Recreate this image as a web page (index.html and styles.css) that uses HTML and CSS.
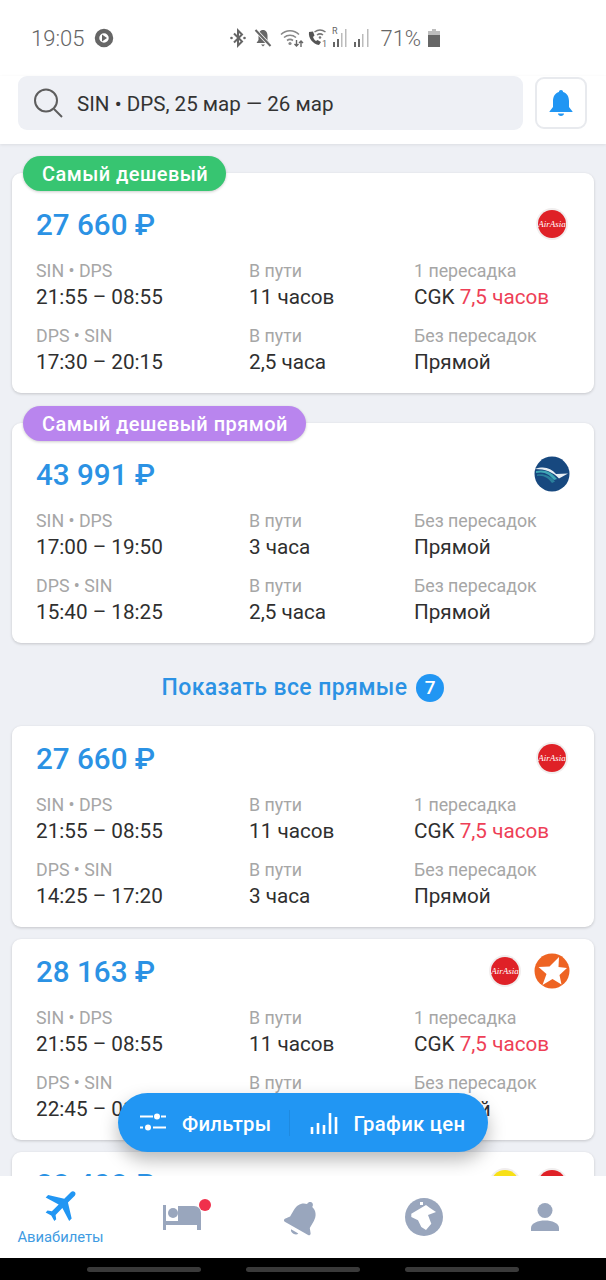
FILE: index.html
```html
<!DOCTYPE html>
<html>
  <head>
    <title>Авиабилеты</title>
    <link rel="stylesheet" href="styles.css">
    <meta name="viewport" content="width=device-width, initial-scale=1.0" />
  </head>
  <body>
    <div class="screen">
      <div class="status">
        <span class="clock">19:05</span>
        <svg class="st-play" viewBox="0 0 20 20"><circle cx="10" cy="10" r="7" fill="none" stroke="#666" stroke-width="4.500"/><path d="M8 6.500l5 3.500-5 3.500z" fill="#666"/></svg>
        <div class="st-icons">
          <svg width="18" height="20" viewBox="0 0 18 20"><path d="M5 5.500l8 8-4 4V2.500l4 4-8 8" fill="none" stroke="#666" stroke-width="2"/><circle cx="2.500" cy="10" r="1.300" fill="#666"/><circle cx="15.500" cy="10" r="1.300" fill="#666"/></svg>
          <svg class="st-mute" width="18" height="20" viewBox="0 0 18 20"><path d="M9 2c3 0 4.500 2.500 4.500 5.500V12l2 3H2.500l2-3V7.500C4.500 4.500 6 2 9 2zM7 16.500h4L9 18.500z" fill="#666"/><path d="M1.500 2l15 16" stroke="#fff" stroke-width="3.500"/><path d="M1.500 2l15 16" stroke="#666" stroke-width="2"/></svg>
          <svg class="st-wifi" width="24" height="20" viewBox="0 0 24 20"><path d="M1 6.500C6 1.500 14 1.500 19 6.500M4 9.500c3.500-3 8.500-3 12 0M7 12.500c2-1.500 4-1.500 6 0" fill="none" stroke="#888" stroke-width="1.600"/><circle cx="10" cy="15.500" r="1.600" fill="#888"/><path d="M16.500 12v6M14.500 16l2 2 2-2M21 19v-6M19 15l2-2 2 2" fill="none" stroke="#666" stroke-width="1.400"/></svg>
          <svg class="st-call" width="23" height="22" viewBox="0 0 23 22"><path d="M3 5c-1 6 4 12 10 13l2-3-3.500-2-1.500 1c-1.500-1-2.500-2.500-3-4l1.500-1.500L7 4.500z" fill="#555"/><path d="M8.500 5c4-3 7-3 11 0M11 8c2-1.500 4-1.500 6 0" fill="none" stroke="#777" stroke-width="1.500"/><circle cx="14" cy="10.500" r="1.300" fill="#777"/><text x="16" y="20" class="st-tiny">1</text></svg>
          <svg class="st-sim1" width="20" height="22" viewBox="0 0 20 22"><text x="2" y="7" class="st-tiny">R</text><path d="M3 15h2v5H3zM7 12h2v8H7z" fill="#666"/><path d="M11 6h1.500v14H11zM15 2h1.500v18H15z" fill="#bbb"/></svg>
          <svg class="st-sim2" width="20" height="22" viewBox="0 0 20 22"><path d="M2 15h2v5H2zM6 12h2v8H6z" fill="#666"/><path d="M10 7h1.500v13H10zM15 2h1.500v18H15z" fill="#bbb"/></svg>
          <span class="st-pct">71%</span>
          <svg class="st-batt" width="14" height="20" viewBox="0 0 14 20"><path d="M5 1h4v2h4v16H1V3h4z" fill="#bdbdbd"/><path d="M1 7h12v12H1z" fill="#666"/></svg>
        </div>
      </div>

      <header class="search-head">
        <div class="search-box">
          <svg class="search-ic" width="32" height="32" viewBox="0 0 32 32"><circle cx="14" cy="13.500" r="11" fill="none" stroke="#5d5d5d" stroke-width="2"/><path d="M22 22l8 8" stroke="#5d5d5d" stroke-width="2"/></svg>
          <span>SIN • DPS, 25 мар — 26 мар</span>
        </div>
        <div class="bell-btn">
          <svg width="26" height="28" viewBox="0 0 26 28"><path d="M13 1c1.300 0 2 .8 2.100 1.900C19 4 21 7.500 21 12v6l3.500 4.500v.5h-23v-.5L5 18v-6c0-4.500 2-8 5.900-9.100C11 1.800 11.700 1 13 1zM10 24.500h6c0 1.500-1.300 2.500-3 2.500s-3-1-3-2.500z" fill="#2196f3"/></svg>
        </div>
      </header>

      <main class="list">
        <section class="card badged">
          <span class="badge green">Самый дешевый</span>
          <div class="card-top">
            <span class="price">27 660 ₽</span>
            <svg class="logo" viewBox="0 0 36 36"><circle cx="18" cy="18" r="16" fill="#f1eeee"/><circle cx="18" cy="18" r="14" fill="#df2127"/><text x="18" y="21" class="aa">AirAsia</text></svg>
          </div>
          <div class="row">
            <div class="col"><small>SIN • DPS</small><b>21:55 – 08:55</b></div>
            <div class="col"><small>В пути</small><b>11 часов</b></div>
            <div class="col"><small>1 пересадка</small><b>CGK <em>7,5 часов</em></b></div>
          </div>
          <div class="row">
            <div class="col"><small>DPS • SIN</small><b>17:30 – 20:15</b></div>
            <div class="col"><small>В пути</small><b>2,5 часа</b></div>
            <div class="col"><small>Без пересадок</small><b>Прямой</b></div>
          </div>
        </section>

        <section class="card badged second">
          <span class="badge purple">Самый дешевый прямой</span>
          <div class="card-top">
            <span class="price">43 991 ₽</span>
            <svg class="logo" viewBox="0 0 36 36"><circle cx="18" cy="18" r="17.500" fill="#17487f"/><path d="M1 13c9-3 16-1 21 5l12-.5-9 5C19 16 11 13 1 13z" fill="#e8eef3"/><path d="M2 17c8-2 13 1 18 7l3-1C18 16 11 13 2 15z" fill="#3fa6b5"/><path d="M3 20c7-1 11 2 15 7l3-1.500c-5-6-11-8-18-7z" fill="#2a7f9c"/></svg>
          </div>
          <div class="row">
            <div class="col"><small>SIN • DPS</small><b>17:00 – 19:50</b></div>
            <div class="col"><small>В пути</small><b>3 часа</b></div>
            <div class="col"><small>Без пересадок</small><b>Прямой</b></div>
          </div>
          <div class="row">
            <div class="col"><small>DPS • SIN</small><b>15:40 – 18:25</b></div>
            <div class="col"><small>В пути</small><b>2,5 часа</b></div>
            <div class="col"><small>Без пересадок</small><b>Прямой</b></div>
          </div>
        </section>

        <div class="show-all"><span>Показать все прямые</span><i class="count">7</i></div>

        <section class="card">
          <div class="card-top">
            <span class="price">27 660 ₽</span>
            <svg class="logo" viewBox="0 0 36 36"><circle cx="18" cy="18" r="16" fill="#f1eeee"/><circle cx="18" cy="18" r="14" fill="#df2127"/><text x="18" y="21" class="aa">AirAsia</text></svg>
          </div>
          <div class="row">
            <div class="col"><small>SIN • DPS</small><b>21:55 – 08:55</b></div>
            <div class="col"><small>В пути</small><b>11 часов</b></div>
            <div class="col"><small>1 пересадка</small><b>CGK <em>7,5 часов</em></b></div>
          </div>
          <div class="row">
            <div class="col"><small>DPS • SIN</small><b>14:25 – 17:20</b></div>
            <div class="col"><small>В пути</small><b>3 часа</b></div>
            <div class="col"><small>Без пересадок</small><b>Прямой</b></div>
          </div>
        </section>

        <section class="card tight">
          <div class="card-top">
            <span class="price">28 163 ₽</span>
            <svg class="logo" viewBox="0 0 36 36"><circle cx="18" cy="18" r="16" fill="#f1eeee"/><circle cx="18" cy="18" r="14" fill="#df2127"/><text x="18" y="21" class="aa">AirAsia</text></svg>
            <svg class="logo" viewBox="0 0 36 36"><circle cx="18" cy="18" r="17.500" fill="#ee6423"/><path d="M25 4l-.5 10 8.500 1-7.500 7 2 9.500-9-5.500-10 6 4-11-8-7 11-.5z" fill="#fff"/></svg>
          </div>
          <div class="row">
            <div class="col"><small>SIN • DPS</small><b>21:55 – 08:55</b></div>
            <div class="col"><small>В пути</small><b>11 часов</b></div>
            <div class="col"><small>1 пересадка</small><b>CGK <em>7,5 часов</em></b></div>
          </div>
          <div class="row">
            <div class="col"><small>DPS • SIN</small><b>22:45 – 01:30</b></div>
            <div class="col"><small>В пути</small><b>3 часа</b></div>
            <div class="col"><small>Без пересадок</small><b>Прямой</b></div>
          </div>
        </section>

        <section class="card tight">
          <div class="card-top">
            <span class="price">28 408 ₽</span>
            <svg class="logo" viewBox="0 0 36 36"><circle cx="18" cy="18" r="16" fill="#f1eeee"/><circle cx="18" cy="18" r="14" fill="#f7e017"/></svg>
            <svg class="logo" viewBox="0 0 36 36"><circle cx="18" cy="18" r="16" fill="#f1eeee"/><circle cx="18" cy="18" r="14" fill="#df2127"/></svg>
          </div>
        </section>

        <div class="float-bar">
          <div class="float-item">
            <svg width="28" height="20" viewBox="0 0 28 20"><path d="M1 3.500h13M22 3.500h5M14 14.500h13M1 14.500h3" stroke="#fff" stroke-width="2" fill="none"/><circle cx="18" cy="3.500" r="3" fill="#fff"/><circle cx="9" cy="14.500" r="3" fill="#fff"/></svg>
            <span>Фильтры</span>
          </div>
          <div class="float-sep"></div>
          <div class="float-item">
            <svg width="28" height="22" viewBox="0 0 28 22"><path d="M2 22v-7M8 22V11M14 22v-9M20 22V1M26 22V5" stroke="#fff" stroke-width="2.600" fill="none"/></svg>
            <span>График цен</span>
          </div>
        </div>
      </main>

      <nav class="tabs">
        <div class="tab active">
          <svg class="plane" width="42" height="42" viewBox="0 0 24 24"><path d="M21 16v-2l-8-5V3.500c0-.83-.67-1.500-1.500-1.500S10 2.670 10 3.500V9l-8 5v2l8-2.500V19l-2 1.500V22l3.500-1 3.500 1v-1.500L13 19v-5.500l8 2.500z"/></svg>
          <span>Авиабилеты</span>
        </div>
        <div class="tab">
          <svg width="38" height="26" viewBox="0 0 38 26"><path d="M15 2h16c4 0 7 3 7 7v17h-4v-5H3v5H0V1h3v16h12z"/><circle cx="10" cy="9" r="5"/></svg>
          <i class="dot"></i>
        </div>
        <div class="tab">
          <svg width="42" height="42" viewBox="0 0 24 24"><g transform="rotate(30 12 12)"><path d="M12 23c1.200 0 2.200-.5 2.400-1.500H9.600c.2 1 1.200 1.500 2.400 1.500zM18.500 15.500V11c0-3.300-1.700-5.900-4.800-6.600V4c0-.9-.8-1.700-1.700-1.700s-1.700.8-1.700 1.700v.4C7.200 5.100 5.500 7.700 5.500 11v4.500l-2 2.500c-.4.700 0 1.500.8 1.500h15.400c.8 0 1.200-.8.800-1.500z"/></g></svg>
        </div>
        <div class="tab">
          <svg width="38" height="38" viewBox="0 0 38 38"><circle cx="19" cy="19" r="19"/><path d="M6.300 15.700l8.400-5L21 7l4 3 6 4-8 3 3.300 8.700L21 32l-4.700-3L13 22.300l-6.700-3.300zM15 4h3v3h-3z" fill="#fff"/></svg>
        </div>
        <div class="tab">
          <svg width="30" height="28" viewBox="0 0 30 28"><circle cx="15" cy="7.500" r="7.500"/><path d="M1 28v-3c0-5 7-7.500 14-7.500s14 2.500 14 7.500v3z"/></svg>
        </div>
      </nav>

      <div class="sys-nav"><i></i><i></i><i></i></div>
    </div>
  </body>
</html>
```

FILE: styles.css
```css
* {
  box-sizing: border-box;
}
body {
  margin: 0;
  font-family: Roboto, "Noto Sans", sans-serif;
  background: #eef0f5;
}
.screen {
  width: 606px;
  height: 1280px;
  display: flex;
  flex-direction: column;
  overflow: hidden;
}

/* status bar */
.status {
  height: 76px;
  flex: none;
  background: #fff;
  display: flex;
  align-items: center;
  padding: 0 0 0 31px;
  color: #666;
}
.clock {
  font-size: 22px;
  font-weight: 300;
}
.st-play {
  width: 20px;
  height: 20px;
  margin-left: 10px;
}
.st-icons {
  display: flex;
  align-items: center;
  margin-left: 115px;
}
.st-tiny {
  font-size: 9px;
  fill: #666;
  font-family: Roboto, sans-serif;
}
.st-mute {
  margin-left: 7px;
}
.st-wifi {
  margin-left: 8px;
}
.st-call {
  margin-left: 2px;
}
.st-sim1 {
  margin-left: 1px;
}
.st-sim2 {
  margin-left: 2px;
}
.st-pct {
  font-size: 22px;
  font-weight: 300;
  margin-left: 8px;
}
.st-batt {
  margin-left: 6px;
}

/* search */
.search-head {
  height: 68px;
  flex: none;
  background: #fff;
  padding: 0 19px 14px 18px;
  display: flex;
  gap: 12px;
  align-items: center;
  box-shadow: 0 1px 3px rgba(0, 0, 0, 0.08);
  position: relative;
  z-index: 2;
}
.search-box {
  flex: 1;
  height: 54px;
  background: #eef0f5;
  border-radius: 9px;
  display: flex;
  align-items: center;
  padding-left: 14px;
  gap: 13px;
  font-size: 20.600px;
  color: #333;
}
.search-box span {
  padding-top: 2px;
}
.bell-btn {
  width: 52px;
  height: 52px;
  border: 2px solid #e8eaee;
  border-radius: 9px;
  display: flex;
  align-items: center;
  justify-content: center;
}

/* list */
.list {
  flex: 1;
  min-height: 0;
  overflow: hidden;
  padding: 29px 12px 0;
  position: relative;
}
.card {
  position: relative;
  background: #fff;
  border-radius: 9px;
  box-shadow: 0 1px 3px rgba(0, 0, 0, 0.18);
  padding: 14px 24px 0;
  height: 201px;
}
.badged {
  height: 220px;
  padding-top: 33px;
}
.second {
  margin-top: 30px;
}
.tight {
  margin-top: 12px;
}
.badge {
  position: absolute;
  left: 11px;
  top: -17px;
  height: 35px;
  border-radius: 18px;
  padding: 0 18px 0 19px;
  display: flex;
  align-items: center;
  color: #fff;
  font-size: 20px;
  font-weight: 500;
  letter-spacing: 0.45px;
  box-shadow: 0 1px 3px rgba(0, 0, 0, 0.2);
}
.green {
  background: #37c571;
}
.purple {
  background: #b985ee;
}
.card-top {
  display: flex;
  align-items: center;
  justify-content: flex-end;
  gap: 11px;
  height: 36px;
  margin-bottom: 18px;
}
.price {
  margin-right: auto;
  padding-top: 2px;
  font-size: 29.600px;
  font-weight: 500;
  color: #2b92e4;
}
.logo {
  width: 36px;
  height: 36px;
  display: block;
}
.aa {
  font-family: "Liberation Serif", serif;
  font-style: italic;
  font-weight: 400;
  font-size: 9px;
  fill: #fff;
  text-anchor: middle;
}
.row {
  display: grid;
  grid-template-columns: 213px 165px 1fr;
  height: 64.500px;
}
.col small {
  display: block;
  font-size: 17.800px;
  line-height: 22px;
  color: #a6a6a6;
}
.col b {
  display: block;
  font-size: 20.700px;
  font-weight: 400;
  line-height: 31.500px;
  color: #2f2f2f;
}
.col em {
  font-style: normal;
  color: #ee3f57;
}
.show-all {
  height: 83px;
  padding-top: 6px;
  display: flex;
  align-items: center;
  justify-content: center;
  gap: 9px;
  font-size: 23px;
  font-weight: 500;
  color: #2b92e4;
  letter-spacing: 0.4px;
}
.count {
  width: 28px;
  height: 28px;
  border-radius: 50%;
  background: #2196f3;
  color: #fff;
  font-style: normal;
  font-size: 19px;
  display: flex;
  align-items: center;
  justify-content: center;
}

/* floating filter bar */
.float-bar {
  position: absolute;
  left: 118px;
  top: 949px;
  width: 370px;
  height: 59px;
  border-radius: 30px;
  background: #2196f3;
  box-shadow: 0 8px 18px rgba(0, 0, 0, 0.28);
  display: flex;
  align-items: center;
  padding: 0 0 0 21px;
  color: #fff;
  font-size: 20.300px;
  font-weight: 500;
  letter-spacing: 0.3px;
  white-space: nowrap;
}
.float-item {
  display: flex;
  align-items: center;
  gap: 15px;
}
.float-item span {
  padding-top: 2px;
}
.float-sep {
  width: 1px;
  height: 26px;
  background: rgba(0, 0, 0, 0.08);
  margin: 0 20px 0 18px;
}

/* bottom tabs */
.tabs {
  height: 82px;
  flex: none;
  background: #fff;
  display: grid;
  grid-template-columns: 121px 121px 121px 121px 122px;
  position: relative;
}
.tab {
  position: relative;
  display: flex;
  flex-direction: column;
  align-items: center;
  justify-content: center;
  fill: #99a6bd;
}
.active {
  fill: #2196f3;
  color: #3f9be2;
  font-size: 14.800px;
  line-height: 18px;
  justify-content: flex-start;
  padding-top: 8px;
}
.plane {
  transform: rotate(45deg);
  margin-left: 4px;
}
.active span {
  margin-top: 2px;
}
.dot {
  position: absolute;
  left: 78px;
  top: 23px;
  width: 12px;
  height: 12px;
  border-radius: 50%;
  background: #f0304c;
}
.sys-nav {
  height: 22px;
  flex: none;
  background: #000;
  display: flex;
  justify-content: center;
  align-items: center;
  gap: 45px;
}
.sys-nav i {
  width: 114px;
  height: 5px;
  border-radius: 3px;
  background: #3a3a3a;
}
```
